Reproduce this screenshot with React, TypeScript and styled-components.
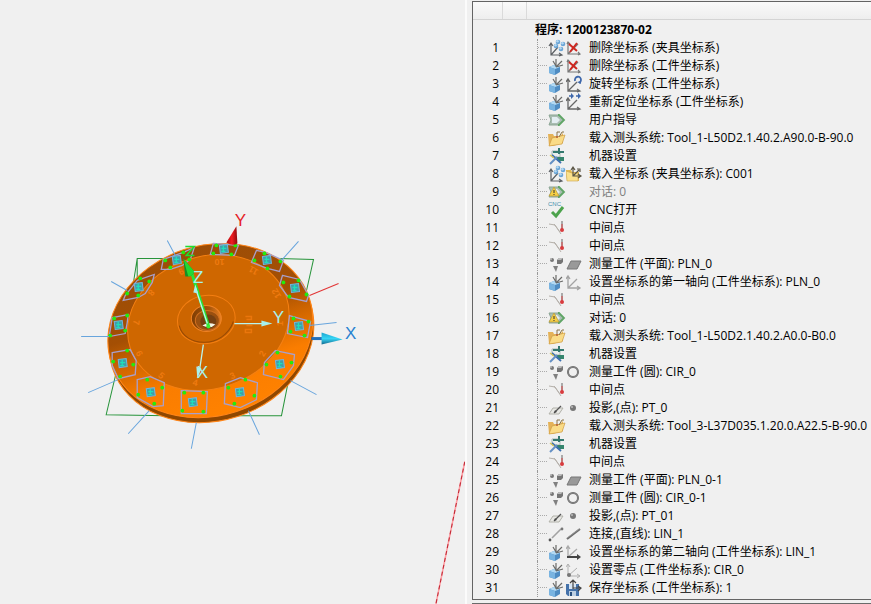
import React from "react";
import styled, { createGlobalStyle } from "styled-components";

const GlobalStyle = createGlobalStyle`
  * { box-sizing: border-box; }
  body {
    margin: 0;
    background: #f0f0f0;
    color: #000;
    font-family: "Open Sans", "Noto Sans CJK SC", sans-serif;
    font-size: 12px;
  }
`;

const Workspace = styled.main`
  display: grid;
  grid-template-columns: minmax(0, 465fr) 7px minmax(0, 399fr);
  height: 100vh;
  overflow: hidden;
`;

const Viewport = styled.section`
  min-width: 0;
  overflow: hidden;
`;

const Scene = styled.svg`
  display: block;
  width: 100%;
  height: 100%;
`;

const Splitter = styled.div`
  border-left: 2px solid #fbfbfb;
`;

const Side = styled.section`
  display: flex;
  flex-direction: column;
  gap: 3px;
  padding-top: 1px;
  min-width: 0;
`;

const Panel = styled.div`
  border: 1px solid #646464;
  border-right: 0;
  overflow: hidden;
`;

const NextPanel = styled.div`
  flex: 1;
  border-top: 2px solid #6a6a6a;
`;

const ColumnHeader = styled.div`
  display: grid;
  grid-template-columns: 30px 24px 1fr;
  height: 18px;
  background: linear-gradient(#fafafa, #eeeeee);
  border-bottom: 1px solid #d4d4d4;
`;

const HeaderCell = styled.span`
  border-right: 1px solid #dadada;
  &:last-child { border-right: 0; }
`;

const Title = styled.h1`
  margin: 0;
  padding: 1px 0 0 62px;
  font-size: 12px;
  line-height: 18px;
  font-weight: 700;
  white-space: nowrap;
`;

const Steps = styled.ol`
  list-style: none;
  margin: 0;
  padding: 0 0 2px;
`;

const Step = styled.li`
  display: grid;
  grid-template-columns: 26px 38px 11px 18px 23px 1fr;
  height: 18px;
  line-height: 18px;
  white-space: nowrap;
`;

const StepNumber = styled.span`
  text-align: right;
`;

const Branch = styled.span`
  grid-column: 3;
  height: 18px;
  border-left: 1px dotted #999;
  background: repeating-linear-gradient(90deg, #aaa 0 1px, transparent 1px 2px) 0 8px / 9px 1px no-repeat;
`;

const StepLabel = styled.span<{ $muted?: boolean }>`
  grid-column: 6;
  color: ${(p) => (p.$muted ? "#808080" : "#000")};
`;

const Glyph = styled.svg`
  display: block;
  width: 18px;
  height: 18px;
`;

type IconName =
  | "fixture" | "part" | "delete" | "rotate" | "move" | "guide" | "folder" | "machine"
  | "folderAxes" | "warn" | "cnc" | "mid" | "probe" | "plane" | "axes" | "circle"
  | "project" | "dot" | "connect" | "line" | "axis2" | "origin" | "save";

const Knob = ({ x, y }: { x: number; y: number }) => (
  <g transform={`translate(${x} ${y})`}>
    <circle r="2.3" fill="#6aa5d6" />
    <circle cx="-.5" cy="-.7" r="1.2" fill="#b4d9f3" />
  </g>
);

const GuideShape = () => (
  <>
    <path d="M1 4h10l5 5-5 5H1l2-5z" fill="#a9bdb2" stroke="#8ba595" />
    <path d="M10 4h1l5 5-5 5h-1" fill="none" stroke="#5fa565" strokeWidth="1.8" />
    <path d="M4 6h5l3 3-3 3H4z" fill="#e3edf2" />
  </>
);

const icons: Record<IconName, React.ReactNode> = {
  fixture: (
    <>
      <path d="M3 5v11h10M3 16l7-8M1 7l2-3 2 3M11 14l3 2-3 1" fill="none" stroke="#5c6064" strokeWidth="1.2" />
      <Knob x={8} y={7} /><Knob x={10} y={3} /><Knob x={15} y={5} /><Knob x={13} y={10} />
    </>
  ),
  part: (
    <>
      <path d="M1 10 6 8l6 2v5l-5 3-6-2z" fill="#4f8cc2" />
      <path d="m1 10 5-2 6 2-5 2z" fill="#b2daf4" />
      <path d="m1 10 6 2v6l-6-2z" fill="#79b4e1" />
      <path d="M8 10V2M8 10l6-6M8 10l7-2M5 4l3 5" fill="none" stroke="#6a6a68" strokeWidth="1.2" />
    </>
  ),
  delete: (
    <>
      <path d="M2 3v12h12M2 15 12 5M1 5l1-2 2 2M12 13l2 2-2 1" fill="none" stroke="#777" strokeWidth="1.2" />
      <path d="m3 5 8 7M11 4l-7 9" stroke="#cf2720" strokeWidth="2" />
    </>
  ),
  rotate: (
    <>
      <path d="M2 4v12h12M2 16l9-9M0 7l2-3 2 3M11 14l3 2-3 1" fill="none" stroke="#666" strokeWidth="1.3" />
      <path d="M9 6c-1-5 6-6 6-1q0 2-2 3" fill="none" stroke="#3e67ab" strokeWidth="1.8" />
      <path d="m11 7 4-1v3z" fill="#3e67ab" />
    </>
  ),
  move: (
    <>
      <path d="M2 5v11h12M2 16l9-9M0 8l2-3 2 3M11 14l3 2-3 1" fill="none" stroke="#666" strokeWidth="1.3" />
      <path d="M3 3h4M10 3h4" stroke="#3e67ab" strokeWidth="1.5" />
      <path d="m5 0 3 3-3 3zM12 0l3 3-3 3z" fill="#3e67ab" />
    </>
  ),
  guide: <GuideShape />,
  warn: (
    <>
      <GuideShape />
      <path d="m6 4 5 9H1z" fill="#f6cf45" stroke="#b99a35" strokeWidth=".7" />
      <path d="M6 7v3M6 11v1" stroke="#333" />
    </>
  ),
  folder: (
    <>
      <path d="M0 5h5l1 2h6l3-3v10l-10 3H1z" fill="#e4b258" />
      <path d="m1 17 3-8 13-3-3 9z" fill="#fadb86" stroke="#cf9c42" strokeWidth=".7" />
      <path d="M9 7V3h3M11 8l3-5h2" fill="none" stroke="#8a7548" />
      <circle cx="9" cy="8" r="1" fill="#b35a38" />
    </>
  ),
  machine: (
    <>
      <path d="M4 4h8v6H4z" fill="#e9eeed" stroke="#a8b5b3" />
      <path d="M5 5h11M11 1v6" stroke="#34796f" strokeWidth="2" />
      <path d="M9 10h7v4H9z" fill="#35856d" />
      <path d="m4 8 9 8" stroke="#3c6fb0" strokeWidth="1.8" />
      <path d="m2 17 7-7" stroke="#6590c4" strokeWidth="2" />
      <path d="m2 8 4 3" stroke="#d8c65a" strokeWidth="1.5" />
    </>
  ),
  folderAxes: (
    <>
      <path d="M0 5h5l1 2h7v9H1z" fill="#e3b850" />
      <path d="m0 6 6 2h6v8H1z" fill="#fae08c" stroke="#cda54a" strokeWidth=".6" />
      <path d="M7 2v9h7M7 11l6-6M5 5l2-3 2 3M12 9l3 2-3 2M11 4h3v3" fill="none" stroke="#5a5545" strokeWidth="1.2" />
    </>
  ),
  cnc: (
    <>
      <text x="0" y="5" fontSize="6" fontFamily="Liberation Sans" fill="#3f8fac">CNC</text>
      <path d="m4 11 4 4 7-9" fill="none" stroke="#4ca34c" strokeWidth="3" />
    </>
  ),
  mid: (
    <>
      <path d="m1 5 6 1 6 9M6 5l6 8" fill="none" stroke="#b5b0aa" />
      <path d="M14 2v8" stroke="#aaa" strokeWidth="2" />
      <path d="M14 5v5" stroke="#d84646" />
      <circle cx="14" cy="11" r="2" fill="#d83b3e" />
    </>
  ),
  probe: (
    <>
      <circle cx="4" cy="5" r="2" fill="#777" />
      <path d="M5 11h5l-2 6z" fill="#808080" />
      <path d="m9 5 2-2h4v4l-2 2H9z" fill="#757575" />
      <path d="m9 5 2-2h4l-2 2z" fill="#bbb" />
      <circle cx="3" cy="4" r="1" fill="#bbb" />
    </>
  ),
  plane: <path d="m1 14 4-8h10l-4 8z" fill="#999" stroke="#767676" />,
  axes: <path d="M2 3v12h12M2 15 11 6M0 6l2-3 2 3M11 13l3 2-3 2" fill="none" stroke="#a3a3a3" strokeWidth="1.3" />,
  circle: (
    <>
      <circle cx="7" cy="9" r="5" fill="none" stroke="#666" strokeWidth="2" />
      <circle cx="7" cy="9" r="5" fill="none" stroke="#a0a0a0" strokeWidth=".6" />
    </>
  ),
  project: (
    <>
      <path d="m1 15 4-6h10l-4 6z" fill="#e8e8e4" stroke="#b2b2aa" />
      <path d="m6 14 7-7" stroke="#555" strokeWidth="1.2" />
      <path d="m6 14 3-1-2-2z" fill="#444" />
    </>
  ),
  dot: (
    <>
      <circle cx="7" cy="9" r="3" fill="#777" />
      <circle cx="6" cy="8" r="1" fill="#bbb" />
    </>
  ),
  connect: (
    <>
      <path d="m4 13 9-9" stroke="#a2a2a2" strokeWidth="1.6" />
      <circle cx="2" cy="15" r="1.4" fill="#555" />
      <circle cx="14" cy="4" r="1.4" fill="#777" />
    </>
  ),
  line: (
    <>
      <path d="M1 14 14 4" stroke="#6b6b6b" strokeWidth="2.2" />
      <path d="M1 13 14 3.5" stroke="#aaa" strokeWidth=".6" />
    </>
  ),
  axis2: (
    <>
      <path d="M2 3v12M2 14l9-8M0 6l2-3 2 3" fill="none" stroke="#aaa" strokeWidth="1.3" />
      <path d="M1 14h11" stroke="#444" strokeWidth="2" />
      <path d="m11 11 4 3-4 3z" fill="#444" />
    </>
  ),
  origin: (
    <>
      <path d="M2 3v12h12M2 15l9-8M0 6l2-3 2 3M11 13l3 2-3 2" fill="none" stroke="#b0b0b0" />
      <circle cx="3" cy="14" r="2" fill="#777" />
    </>
  ),
  save: (
    <>
      <path d="M0 5h13v12H2l-2-2z" fill="#4572aa" />
      <path d="M3 5h7v5H3z" fill="#d7e5f4" />
      <path d="M3 12h7v5H3z" fill="#bdd0e3" />
      <path d="M4 13h2v4H4z" fill="#294f7d" />
      <path d="M7 10V2M4 4l3-3 3 3M7 9h8M12 7l3 2-3 3" fill="none" stroke="#444" strokeWidth="1.2" />
    </>
  ),
};

const Icon = ({ name }: { name: IconName }) => (
  <Glyph viewBox="0 0 18 18" aria-hidden="true">{icons[name]}</Glyph>
);

interface StepData { text: string; icons: IconName[]; muted?: boolean }

const steps: StepData[] = [
  { text: "删除坐标系 (夹具坐标系)", icons: ["fixture", "delete"] },
  { text: "删除坐标系 (工件坐标系)", icons: ["part", "delete"] },
  { text: "旋转坐标系 (工件坐标系)", icons: ["part", "rotate"] },
  { text: "重新定位坐标系 (工件坐标系)", icons: ["part", "move"] },
  { text: "用户指导", icons: ["guide"] },
  { text: "载入测头系统: Tool_1-L50D2.1.40.2.A90.0-B-90.0", icons: ["folder"] },
  { text: "机器设置", icons: ["machine"] },
  { text: "载入坐标系 (夹具坐标系): C001", icons: ["fixture", "folderAxes"] },
  { text: "对话: 0", icons: ["warn"], muted: true },
  { text: "CNC打开", icons: ["cnc"] },
  { text: "中间点", icons: ["mid"] },
  { text: "中间点", icons: ["mid"] },
  { text: "测量工件 (平面): PLN_0", icons: ["probe", "plane"] },
  { text: "设置坐标系的第一轴向 (工件坐标系): PLN_0", icons: ["part", "axes"] },
  { text: "中间点", icons: ["mid"] },
  { text: "对话: 0", icons: ["warn"] },
  { text: "载入测头系统: Tool_1-L50D2.1.40.2.A0.0-B0.0", icons: ["folder"] },
  { text: "机器设置", icons: ["machine"] },
  { text: "测量工件 (圆): CIR_0", icons: ["probe", "circle"] },
  { text: "中间点", icons: ["mid"] },
  { text: "投影,(点): PT_0", icons: ["project", "dot"] },
  { text: "载入测头系统: Tool_3-L37D035.1.20.0.A22.5-B-90.0", icons: ["folder"] },
  { text: "机器设置", icons: ["machine"] },
  { text: "中间点", icons: ["mid"] },
  { text: "测量工件 (平面): PLN_0-1", icons: ["probe", "plane"] },
  { text: "测量工件 (圆): CIR_0-1", icons: ["probe", "circle"] },
  { text: "投影,(点): PT_01", icons: ["project", "dot"] },
  { text: "连接,(直线): LIN_1", icons: ["connect", "line"] },
  { text: "设置坐标系的第二轴向 (工件坐标系): LIN_1", icons: ["part", "axis2"] },
  { text: "设置零点 (工件坐标系): CIR_0", icons: ["part", "origin"] },
  { text: "保存坐标系 (工件坐标系): 1", icons: ["part", "save"] },
];

interface PocketData { c: [number, number]; outline: string; dots: [number, number][] }

const pockets: PocketData[] = [
  { c: [118, 324], outline: "112,317 128,314 127,322 125,333 109,336", dots: [[114, 318], [127, 315], [125, 330], [110, 335]] },
  { c: [138, 286], outline: "137,280 154,274 152,282 145,293 138,297 123,300 125,295", dots: [[140, 278], [149, 281], [138, 295], [127, 293]] },
  { c: [176, 259], outline: "163,259 183,252 194,247 190,259 182,265 170,269 161,269", dots: [[165, 260], [183, 252], [189, 259], [170, 267]] },
  { c: [223, 248], outline: "213,243 238,245 234,255 210,254", dots: [[216, 245], [235, 245], [231, 254], [213, 253]] },
  { c: [266, 259], outline: "256,250 265,252 283,260 279,271 267,268 251,262", dots: [[264, 253], [280, 261], [267, 268], [254, 260]] },
  { c: [294, 287], outline: "282,275 299,279 308,295 306,301 288,297 279,285", dots: [[283, 282], [298, 280], [306, 294], [289, 296]] },
  { c: [298, 325], outline: "289,315 310,321 307,337 287,333", dots: [[293, 318], [308, 321], [304, 335], [290, 331]] },
  { c: [279, 363], outline: "275,350 294,354 293,365 283,379 263,374 264,362", dots: [[277, 352], [291, 362], [280, 376], [266, 364]] },
  { c: [239, 391], outline: "225,383 240,377 257,382 256,399 240,407 224,403", dots: [[228, 387], [245, 379], [254, 395], [234, 403]] },
  { c: [192, 401], outline: "181,390 207,391 206,413 181,413", dots: [[184, 392], [203, 392], [203, 411], [182, 410]] },
  { c: [150, 391], outline: "137,379 150,376 164,382 163,405 153,406 137,397", dots: [[147, 379], [162, 387], [154, 403], [138, 394]] },
  { c: [122, 362], outline: "112,352 130,349 136,360 135,374 118,378 112,365", dots: [[127, 350], [133, 364], [120, 376], [113, 361]] },
];

const marks: [number, number, string, number][] = [
  [136, 322, "7", 95], [151, 292, "8", 130], [181, 271, "9", 155], [219, 262, "10", 180],
  [253, 270, "11", 210], [276, 293, "12", 240], [280, 323, "1", 270], [262, 353, "2", 300],
  [232, 375, "3", 335], [195, 382, "4", 10], [161, 375, "5", 40], [139, 353, "6", 65],
];

const Model = () => (
  <Scene viewBox="0 0 465 604" preserveAspectRatio="xMinYMin slice" role="img" aria-label="3D">
    <defs>
      <linearGradient id="band" x1="0" y1="0" x2="0" y2="1">
        <stop offset="0" stopColor="#9c4d06" />
        <stop offset=".4" stopColor="#a44f04" />
        <stop offset=".55" stopColor="#cf6500" />
        <stop offset=".75" stopColor="#fa7d00" />
        <stop offset="1" stopColor="#ff8200" />
      </linearGradient>
      <linearGradient id="cyanCone" x1="0" y1="0" x2="0" y2="1">
        <stop offset="0" stopColor="#1ba4cf" />
        <stop offset=".5" stopColor="#36d5f5" />
        <stop offset="1" stopColor="#14698e" />
      </linearGradient>
      <linearGradient id="redCone">
        <stop offset="0" stopColor="#ad090d" />
        <stop offset=".5" stopColor="#f21c21" />
        <stop offset="1" stopColor="#8e080b" />
      </linearGradient>
      <linearGradient id="hole">
        <stop offset="0" stopColor="#7d3d04" />
        <stop offset=".6" stopColor="#a65408" />
        <stop offset="1" stopColor="#e98225" />
      </linearGradient>
    </defs>

    <path d="M137 283V258h32M137 258l-5 32M278 258l35 1-9 40M116 372l-10 42 60 1M230 415h51l9-45" fill="none" stroke="#27943a" />
    <ellipse cx="211" cy="335" rx="104" ry="85" transform="rotate(-18 211 335)" fill="#8f4700" stroke="#ff8518" />
    <ellipse cx="210" cy="330" rx="104" ry="85" transform="rotate(-18 210 330)" fill="url(#band)" stroke="#ff8518" />
    <ellipse cx="208" cy="322" rx="82" ry="66" transform="rotate(-18 208 322)" fill="#cf6700" stroke="#f58012" />

    {marks.map(([x, y, t, r]) => (
      <text key={t} x={x} y={y + 3} fontSize="9" fontWeight="700" textAnchor="middle" fontFamily="Liberation Sans" fill="#ee7a10" transform={`rotate(${r} ${x} ${y})`}>{t}</text>
    ))}
    <path d="M245 316h6v3h-5M246 325h6M245 329h6v3h-6z" fill="none" stroke="#ea760c" strokeWidth="1.5" />

    <ellipse cx="206" cy="319" rx="29" ry="24" transform="rotate(-12 206 319)" fill="#cc6500" stroke="#f47f12" />
    <path d="M179 325c5 22 44 24 54-4" fill="none" stroke="#984a04" />
    <ellipse cx="206" cy="318" rx="15" ry="13" fill="url(#hole)" stroke="#f08325" />
    <ellipse cx="207" cy="320" rx="12" ry="10" fill="#9a5010" stroke="#d17021" />
    <ellipse cx="208" cy="321" rx="8" ry="7" fill="#754012" />
    <path d="M202 325q6-4 13-1-5 5-13 1" fill="#f5f5e8" />

    {pockets.map(({ c: [x, y], outline, dots }) => (
      <g key={`${x}-${y}`}>
        <polygon points={outline} fill="none" stroke="#a8a0cc" strokeWidth="1.3" />
        <path d={`M${x - 4} ${y - 3}l8-1 1 8-8 1z`} fill="#3f9fa9" stroke="#77b3dc" />
        <path d={`M${x - 2} ${y}h5M${x} ${y - 3}v6M${x - 2} ${y + 3}h4`} stroke="#20dfba" strokeWidth="1.3" />
        {dots.map(([dx, dy]) => <circle key={`${dx}-${dy}`} cx={dx} cy={dy} r="1.9" fill="#22ec0c" />)}
      </g>
    ))}
    <path d="M81 336h28M88 392l30-13M128 433l21-23M191 448l5-26M248 410l11 24M290 380l26 14M309 325l27-3M281 260l17-19M175 255l-8-15M111 281l16 9" fill="none" stroke="#68a5dd" />
    <path d="m309 295 29-12" stroke="#e23535" />

    <path d="M311 338h12" stroke="#226fba" strokeWidth="3" />
    <path d="m321 332 21 7-21 5z" fill="url(#cyanCone)" />
    <path d="m226 242 10-16 1 17q-5 3-11-1" fill="url(#redCone)" />
    <path d="m190 268 18 57" stroke="#28e336" strokeWidth="3" />
    <path d="m183 258 11 13q-2 6-9 5z" fill="#168f26" />
    <path d="m183 258 11 13q-2 5-6 5z" fill="#24d832" />
    <path d="M185 246h9l-8 9h8" fill="none" stroke="#20dc31" strokeWidth="1.5" />
    <path d="m195 287 12 36M234 323h30M203 344l-4 27" stroke="#b9f5ee" strokeWidth="1.3" />
    <path d="m195 284 3 9-5-1zM261 320l11 3-11 3zM196 366l5 2-4 10z" fill="#a7f1ed" />
    <circle cx="208" cy="326" r="2" fill="#36f12d" />
    <g fontFamily="Liberation Sans" fontSize="17" textAnchor="middle">
      <text x="240" y="226" fill="#e62228">Y</text>
      <text x="350" y="338" fill="#2882d0">X</text>
      <text x="198" y="283" fill="#a7f1ed">Z</text>
      <text x="278" y="322" fill="#a7f1ed">Y</text>
      <text x="202" y="377" fill="#a7f1ed">X</text>
    </g>
    <path d="M464 461 435 604" stroke="#ff9aa0" strokeWidth="1.5" />
    <path d="M464 461 435 604" stroke="#bd2632" strokeDasharray="4 3" />
  </Scene>
);

export default function App() {
  return (
    <>
      <GlobalStyle />
      <Workspace>
        <Viewport><Model /></Viewport>
        <Splitter />
        <Side>
          <Panel>
            <ColumnHeader><HeaderCell /><HeaderCell /><HeaderCell /></ColumnHeader>
            <Title>程序: 1200123870-02</Title>
            <Steps>
              {steps.map((step, i) => (
                <Step key={i}>
                  <StepNumber>{i + 1}</StepNumber>
                  <Branch />
                  {step.icons.map((name) => <Icon key={name} name={name} />)}
                  <StepLabel $muted={step.muted}>{step.text}</StepLabel>
                </Step>
              ))}
            </Steps>
          </Panel>
          <NextPanel />
        </Side>
      </Workspace>
    </>
  );
}
